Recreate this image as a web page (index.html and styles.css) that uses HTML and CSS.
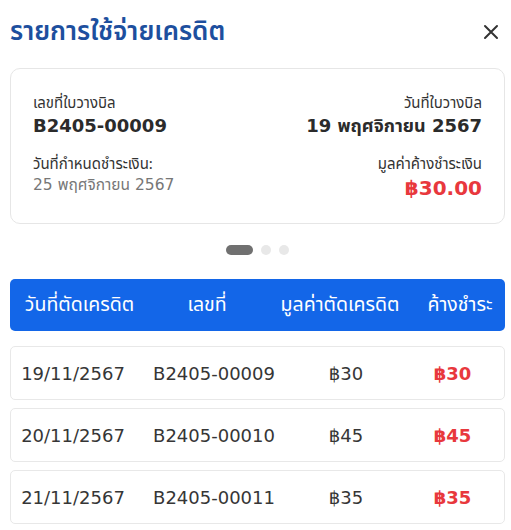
FILE: index.html
```html
<!DOCTYPE html>
<html lang="th">
<head>
  <meta charset="UTF-8" />
  <title>รายการใช้จ่ายเครดิต</title>
  <link rel="stylesheet" href="styles.css">
</head>
<body>
  <div class="sheet">
    <header class="sheet-head">
      <h1>รายการใช้จ่ายเครดิต</h1>
      <button class="close" aria-label="ปิด">
        <svg width="16" height="16" viewBox="0 0 16 16"><path d="M2 2 L14 14 M14 2 L2 14" stroke="#333" stroke-width="2" stroke-linecap="round"/></svg>
      </button>
    </header>

    <section class="bill-card">
      <div class="bill-row">
        <div class="field">
          <div class="label">เลขที่ใบวางบิล</div>
          <div class="value">B2405-00009</div>
        </div>
        <div class="field right">
          <div class="label">วันที่ใบวางบิล</div>
          <div class="value">19 พฤศจิกายน 2567</div>
        </div>
      </div>
      <div class="bill-row">
        <div class="field">
          <div class="label">วันที่กำหนดชำระเงิน:</div>
          <div class="sub">25 พฤศจิกายน 2567</div>
        </div>
        <div class="field right">
          <div class="label">มูลค่าค้างชำระเงิน</div>
          <div class="amount">฿30.00</div>
        </div>
      </div>
    </section>

    <div class="dots">
      <span class="dot active"></span>
      <span class="dot"></span>
      <span class="dot"></span>
    </div>

    <div class="table-head">
      <div>วันที่ตัดเครดิต</div>
      <div>เลขที่</div>
      <div>มูลค่าตัดเครดิต</div>
      <div>ค้างชำระ</div>
    </div>

    <div class="table-body">
      <div class="t-row">
        <div>19/11/2567</div>
        <div>B2405-00009</div>
        <div>฿30</div>
        <div class="due">฿30</div>
      </div>
      <div class="t-row">
        <div>20/11/2567</div>
        <div>B2405-00010</div>
        <div>฿45</div>
        <div class="due">฿45</div>
      </div>
      <div class="t-row">
        <div>21/11/2567</div>
        <div>B2405-00011</div>
        <div>฿35</div>
        <div class="due">฿35</div>
      </div>
    </div>
  </div>
</body>
</html>
```

FILE: styles.css
```css
body {
  margin: 0;
  background: #fff;
  font-family: "Noto Sans", "Noto Sans Thai", sans-serif;
  color: #333;
}

.sheet {
  padding: 0 6px 0 10px;
}

.sheet-head {
  display: flex;
  justify-content: space-between;
  align-items: center;
  height: 64px;
}

.sheet-head h1 {
  margin: 0;
  font-size: 26px;
  font-weight: 600;
  color: #1d4f9e;
}

.close {
  border: 0;
  background: none;
  padding: 0;
  margin-right: 6px;
  display: flex;
}

.bill-card {
  margin-top: 4px;
  border: 1px solid #e6e6e6;
  border-radius: 10px;
  padding: 23px 22px 21px;
}

.bill-row {
  display: flex;
  justify-content: space-between;
}

.bill-row + .bill-row {
  margin-top: 14px;
}

.field.right {
  text-align: right;
}

.label {
  font-size: 15px;
  line-height: 21px;
  color: #333;
}

.value,
.amount,
.sub,
.t-row {
  font-family: "DejaVu Sans", "Noto Sans Thai", sans-serif;
}

.value {
  font-size: 18px;
  line-height: 26px;
  font-weight: 700;
  color: #2b2b2b;
}

.sub {
  font-size: 15.5px;
  line-height: 22px;
  color: #777;
}

.amount {
  font-size: 20px;
  line-height: 28px;
  font-weight: 700;
  color: #e8383d;
}

.dots {
  display: flex;
  justify-content: center;
  gap: 8px;
  margin: 21px 0 24px;
}

.dot {
  width: 10px;
  height: 10px;
  border-radius: 5px;
  background: #e8e8e8;
}

.dot.active {
  width: 27px;
  background: #707070;
}

.table-head {
  display: grid;
  grid-template-columns: 139px 116px 150px 90px;
  align-items: center;
  height: 52px;
  background: #1366e8;
  border-radius: 5px;
  color: #fff;
  font-size: 19.5px;
  text-align: center;
}

.table-body {
  display: flex;
  flex-direction: column;
  gap: 8px;
  margin-top: 15px;
}

.t-row {
  display: grid;
  grid-template-columns: 124px 158px 106px 107px;
  align-items: center;
  height: 52px;
  border: 1px solid #e8e8e8;
  border-radius: 5px;
  font-size: 18px;
  color: #363636;
  text-align: center;
}

.t-row .due {
  color: #e8383d;
  font-weight: 700;
}
```
